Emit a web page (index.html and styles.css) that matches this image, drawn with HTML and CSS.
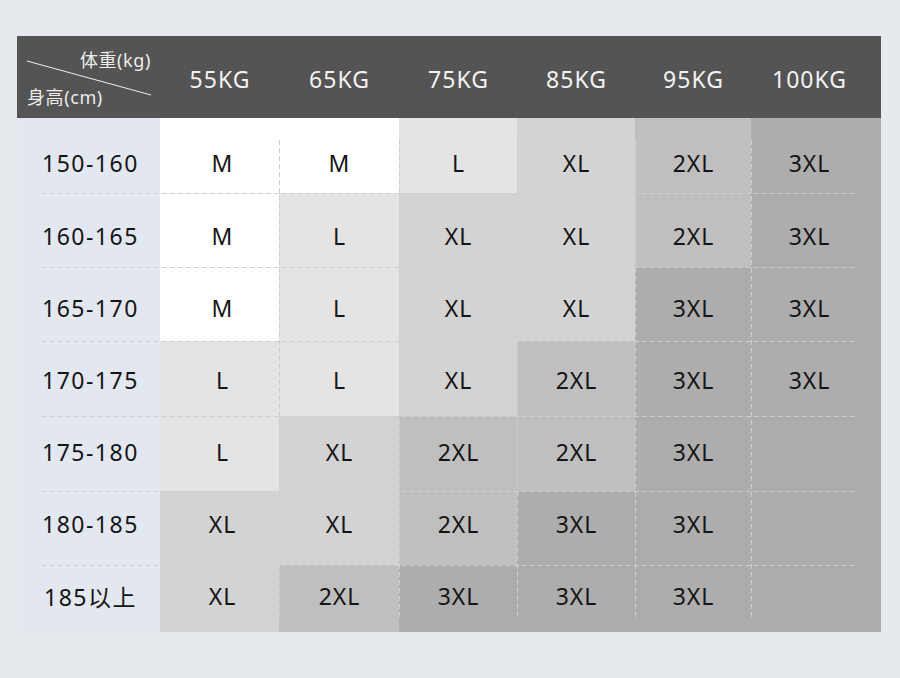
FILE: index.html
```html
<!DOCTYPE html>
<html lang="zh">
<head>
<meta charset="utf-8">
<link rel="stylesheet" href="styles.css">
</head>
<body>
<div class="chart">
  <div class="head">
    <div class="corner">
      <svg class="diag" width="143" height="82" viewBox="0 0 143 82"><line x1="10" y1="25" x2="134" y2="59" stroke="#f0f0f0" stroke-width="1"/></svg>
      <span class="c-top">体重(kg)</span>
      <span class="c-bot">身高(cm)</span>
    </div>
    <div class="hc">55KG</div>
    <div class="hc">65KG</div>
    <div class="hc">75KG</div>
    <div class="hc">85KG</div>
    <div class="hc">95KG</div>
    <div class="hc last">100KG</div>
  </div>
  <div class="body">
    <div class="row r1">
      <div class="lab">150-160</div>
      <div class="cell s-m first">M</div><div class="cell s-m">M</div><div class="cell s-l">L</div><div class="cell s-xl">XL</div><div class="cell s-2xl">2XL</div><div class="cell s-3xl last">3XL</div>
    </div>
    <div class="row r2">
      <div class="lab">160-165</div>
      <div class="cell s-m first">M</div><div class="cell s-l">L</div><div class="cell s-xl">XL</div><div class="cell s-xl">XL</div><div class="cell s-2xl">2XL</div><div class="cell s-3xl last">3XL</div>
    </div>
    <div class="row r3">
      <div class="lab">165-170</div>
      <div class="cell s-m first">M</div><div class="cell s-l">L</div><div class="cell s-xl">XL</div><div class="cell s-xl">XL</div><div class="cell s-3xl">3XL</div><div class="cell s-3xl last">3XL</div>
    </div>
    <div class="row r4">
      <div class="lab">170-175</div>
      <div class="cell s-l first">L</div><div class="cell s-l">L</div><div class="cell s-xl">XL</div><div class="cell s-2xl">2XL</div><div class="cell s-3xl">3XL</div><div class="cell s-3xl last">3XL</div>
    </div>
    <div class="row r5">
      <div class="lab">175-180</div>
      <div class="cell s-l first">L</div><div class="cell s-xl">XL</div><div class="cell s-2xl">2XL</div><div class="cell s-2xl">2XL</div><div class="cell s-3xl">3XL</div><div class="cell s-3xl last"></div>
    </div>
    <div class="row r6">
      <div class="lab">180-185</div>
      <div class="cell s-xl first">XL</div><div class="cell s-xl">XL</div><div class="cell s-2xl">2XL</div><div class="cell s-3xl">3XL</div><div class="cell s-3xl">3XL</div><div class="cell s-3xl last"></div>
    </div>
    <div class="row r7">
      <div class="lab">185以上</div>
      <div class="cell s-xl first">XL</div><div class="cell s-2xl">2XL</div><div class="cell s-3xl">3XL</div><div class="cell s-3xl">3XL</div><div class="cell s-3xl">3XL</div><div class="cell s-3xl last"></div>
    </div>
    <svg class="grid" width="864" height="514" viewBox="0 0 864 514">
      <g stroke="#cfcfcf" stroke-width="1" stroke-dasharray="5 3" fill="none">
        <line x1="25" y1="75.5" x2="839" y2="75.5"/>
        <line x1="25" y1="149.5" x2="839" y2="149.5"/>
        <line x1="25" y1="223.5" x2="839" y2="223.5"/>
        <line x1="25" y1="298.5" x2="839" y2="298.5"/>
        <line x1="25" y1="373.5" x2="839" y2="373.5"/>
        <line x1="25" y1="447.5" x2="839" y2="447.5"/>
        <line x1="262.5" y1="22" x2="262.5" y2="501"/>
        <line x1="382.5" y1="22" x2="382.5" y2="501"/>
        <line x1="500.5" y1="22" x2="500.5" y2="501"/>
        <line x1="618.5" y1="22" x2="618.5" y2="501"/>
        <line x1="734.5" y1="22" x2="734.5" y2="501"/>
      </g>
    </svg>
  </div>
</div>
</body>
</html>
```

FILE: styles.css
```css
html, body {
  margin: 0;
  padding: 0;
}
body {
  background: #e6e9ee;
  font-family: "Noto Sans", "Noto Sans CJK SC", sans-serif;
  width: 900px;
  height: 678px;
  overflow: hidden;
}
.chart {
  margin: 36px 0 0 17px;
  width: 864px;
}
.head,
.row {
  display: grid;
  grid-template-columns: 143px 119px 120px 118px 118px 116px 130px;
}
.head {
  height: 82px;
  background: #545454;
  color: #f2f2f2;
}
.corner {
  position: relative;
  display: flex;
  flex-direction: column;
  justify-content: space-between;
  padding: 12px 10px 9px 10px;
  font-size: 18px;
  line-height: 24px;
  letter-spacing: 0.6px;
  color: #ececec;
}
.diag {
  position: absolute;
  left: 0;
  top: 0;
}
.c-top {
  align-self: flex-end;
  margin-right: -1px;
}
.c-bot {
  align-self: flex-start;
}
.hc {
  display: flex;
  align-items: center;
  justify-content: center;
  font-size: 23px;
  letter-spacing: 1px;
  padding-top: 4px;
  padding-left: 1px;
}
.hc.last,
.cell.last {
  padding-right: 14px;
}
.body {
  position: relative;
  height: 514px;
}
.row {
  font-size: 23px;
  color: #151515;
  letter-spacing: 1px;
}
.lab,
.cell {
  display: flex;
  align-items: center;
  justify-content: center;
}
.cell {
  padding-left: 1px;
}
.cell.first {
  padding-left: 6px;
}
.lab {
  background: #e3e7ef;
  justify-content: flex-start;
  padding-left: 25px;
  letter-spacing: 1.5px;
}
.r7 .lab {
  padding-left: 27px;
}
.r1 { height: 75px; }
.r2 { height: 74px; }
.r3 { height: 74px; }
.r4 { height: 75px; }
.r5 { height: 75px; }
.r6 { height: 74px; }
.r7 { height: 67px; }
.r1 > div { padding-top: 15px; }
.r2 > div { padding-top: 12px; }
.r3 > div { padding-top: 8px; }
.r4 > div { padding-top: 3px; }
.r5 > div { padding-bottom: 3px; }
.r6 > div { padding-bottom: 8px; }
.r7 > div { padding-bottom: 5px; }
.s-m { background: #ffffff; }
.s-l { background: #e4e4e4; }
.s-xl { background: #d3d3d3; }
.s-2xl { background: #bfbfbf; }
.s-3xl { background: #adadad; }
.grid {
  position: absolute;
  left: 0;
  top: 0;
  pointer-events: none;
}
```
